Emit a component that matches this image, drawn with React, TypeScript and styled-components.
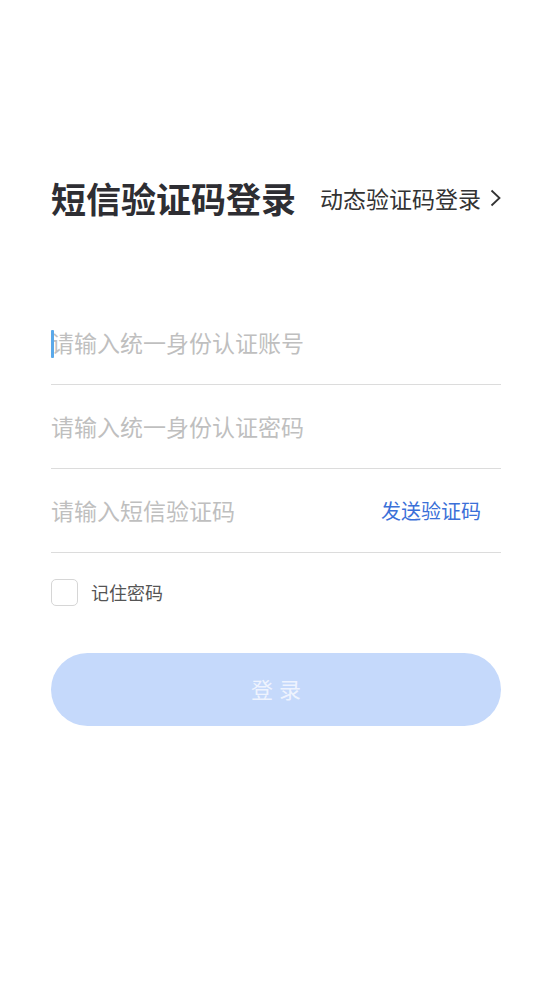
import React from "react";
import styled, { createGlobalStyle } from "styled-components";

const Global = createGlobalStyle`
  html, body { margin: 0; padding: 0; background: #fff; }
  body { font-family: "Noto Sans CJK SC", "Noto Sans", sans-serif; }
  * { box-sizing: border-box; }
`;

const Page = styled.div`
  width: 552px;
  min-height: 983px;
  padding: 174px 51px 0 51px;
  background: #fff;
`;

const Header = styled.div`
  display: flex;
  align-items: center;
  justify-content: space-between;
  height: 48px;
`;

const Title = styled.h1`
  margin: 0;
  font-size: 35px;
  font-weight: 700;
  color: #2e2e33;
  line-height: 48px;
`;

const SwitchLink = styled.a`
  display: flex;
  align-items: center;
  gap: 9px;
  font-size: 23px;
  color: #333;
  line-height: 30px;
  cursor: pointer;
`;

const Form = styled.div`
  margin-top: 79px;
  display: flex;
  flex-direction: column;
`;

const Row = styled.div`
  position: relative;
  display: flex;
  align-items: center;
  height: 84px;
  padding: 27px 0 28px 0;
  border-bottom: 1px solid #dcdcdc;
`;

const Input = styled.input`
  flex: 1;
  min-width: 0;
  border: none;
  outline: none;
  padding: 0;
  height: 28px;
  font-family: inherit;
  font-size: 23px;
  color: #333;
  background: transparent;
  &::placeholder { color: #bfbfbf; }
`;

const Caret = styled.span`
  position: absolute;
  left: 0;
  top: 29px;
  width: 3px;
  height: 28px;
  background: #5aa9ea;
  border-radius: 1px;
`;

const SendCode = styled.button`
  border: none;
  background: none;
  padding: 0 20px 0 0;
  font-family: inherit;
  font-size: 20px;
  color: #3b70d8;
  cursor: pointer;
`;

const RememberRow = styled.label`
  display: flex;
  align-items: center;
  gap: 13px;
  margin-top: 25px;
  height: 28px;
`;

const Box = styled.span`
  width: 27px;
  height: 27px;
  border: 1.5px solid #d6d6d6;
  border-radius: 5px;
  background: #fff;
`;

const RememberText = styled.span`
  font-size: 18px;
  color: #555;
`;

const LoginButton = styled.button`
  margin-top: 47px;
  width: 450px;
  height: 73px;
  border: none;
  border-radius: 37px;
  background: #c5d9fb;
  color: #eef3fe;
  font-family: inherit;
  font-size: 22px;
  letter-spacing: 6px;
  padding: 0 0 4px 6px;
`;

export default function App() {
  return (
    <>
      <Global />
      <Page>
        <Header>
          <Title>短信验证码登录</Title>
          <SwitchLink>
            动态验证码登录
            <svg width="11" height="18" viewBox="0 0 11 18">
              <polyline points="1.5,1.5 9.5,9 1.5,16.5" fill="none" stroke="#333" strokeWidth="1.8" />
            </svg>
          </SwitchLink>
        </Header>
        <Form>
          <Row>
            <Caret />
            <Input placeholder="请输入统一身份认证账号" />
          </Row>
          <Row>
            <Input type="password" placeholder="请输入统一身份认证密码" />
          </Row>
          <Row>
            <Input placeholder="请输入短信验证码" />
            <SendCode>发送验证码</SendCode>
          </Row>
          <RememberRow>
            <Box />
            <RememberText>记住密码</RememberText>
          </RememberRow>
          <LoginButton>登录</LoginButton>
        </Form>
      </Page>
    </>
  );
}
